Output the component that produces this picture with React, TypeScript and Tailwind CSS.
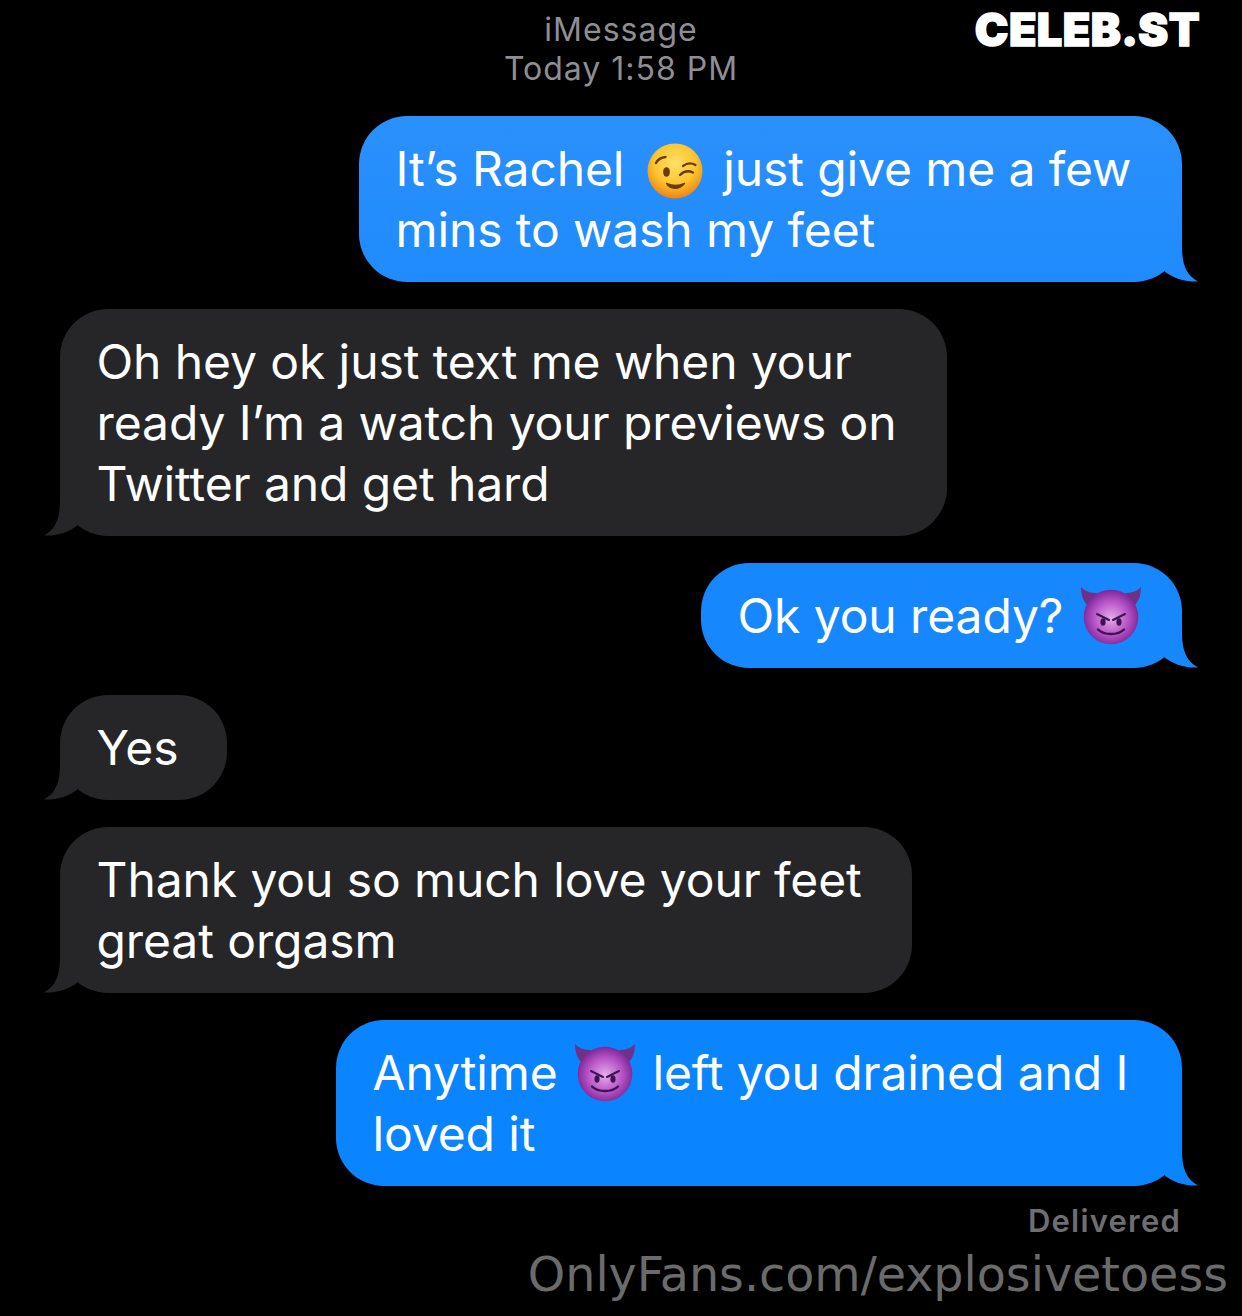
const textFont = { fontFamily: "Inter, 'Liberation Sans', sans-serif" };

function Wink({ size = 60 }: { size?: number }) {
  return (
    <svg width={size} height={size} viewBox="0 0 60 60" className="-my-[10px] ml-[7px] mr-[5px] inline-block align-[-4.5px]">
      <defs>
        <radialGradient id="winkFace" cx="50%" cy="36%" r="64%">
          <stop offset="0%" stopColor="#ffe066" />
          <stop offset="60%" stopColor="#fcc430" />
          <stop offset="100%" stopColor="#ee8412" />
        </radialGradient>
      </defs>
      <circle cx="30" cy="30" r="27.5" fill="url(#winkFace)" />
      <path d="M11 22 C13 18 16 16.5 20.5 16" stroke="#6b3c08" strokeWidth="2.4" fill="none" strokeLinecap="round" />
      <path d="M38 25 C42 22 47 22 50.5 24" stroke="#6b3c08" strokeWidth="2.2" fill="none" strokeLinecap="round" />
      <ellipse cx="21.5" cy="31" rx="3.4" ry="4.8" fill="#6b3c08" />
      <path d="M35 34 C39 30 44 29.5 48 31.5" stroke="#6b3c08" strokeWidth="2.4" fill="none" strokeLinecap="round" />
      <path d="M21.5 42.5 C25 48.5 34 49 39.5 42.5 C34 45 27 45 21.5 42.5Z" fill="#6b3c08" stroke="#6b3c08" strokeWidth="1.4" strokeLinejoin="round" />
    </svg>
  );
}

function Imp({ id, size = 62 }: { id: string; size?: number }) {
  return (
    <svg width={size} height={size} viewBox="0 0 62 62" className="-my-[10px] mx-[3px] inline-block align-[-3.5px]">
      <defs>
        <radialGradient id={id} cx="50%" cy="52%" r="52%">
          <stop offset="0%" stopColor="#e4ade9" />
          <stop offset="60%" stopColor="#b755c6" />
          <stop offset="100%" stopColor="#7d2598" />
        </radialGradient>
      </defs>
      <path d="M1 2 C1 10 3 15 7 20 L17 8 C10 8 5 6 1 2Z" fill="#6e3186" />
      <path d="M61 2 C61 10 59 15 55 20 L45 8 C52 8 57 6 61 2Z" fill="#6e3186" />
      <circle cx="31" cy="32" r="27.3" fill={`url(#${id})`} />
      <path d="M17 29 L29 35 M45 29 L33 35" stroke="#3f1353" strokeWidth="2" strokeLinecap="round" />
      <ellipse cx="23" cy="37" rx="2.6" ry="3.8" fill="#3f1353" />
      <ellipse cx="39" cy="37" rx="2.6" ry="3.8" fill="#3f1353" />
      <path d="M18 44.5 C24 50.5 38 50.5 44 44.5" stroke="#3f1353" strokeWidth="2.4" fill="none" strokeLinecap="round" />
    </svg>
  );
}

function Tail({ side, color }: { side: "left" | "right"; color: string }) {
  return (
    <svg
      width="50"
      height="50"
      viewBox="0 0 50 50"
      className={side === "right" ? "absolute bottom-0 right-[-16px]" : "absolute bottom-0 left-[-16px] -scale-x-100"}
    >
      <path d="M0 0 L34 0 L34 14 C34 32 38 43 50 49.5 C38 50 25 47 15 38 L0 20 Z" fill={color} />
    </svg>
  );
}

function Bubble({
  side,
  width,
  bg,
  tail,
  children,
}: {
  side: "left" | "right";
  width: string;
  bg: string;
  tail: string;
  children: React.ReactNode;
}) {
  return (
    <div className={`relative ${width} ${side === "right" ? "self-end" : "self-start"}`}>
      <Tail side={side} color={tail} />
      <div className={`relative rounded-[48px] py-[22px] pl-[36.5px] pr-[30px] ${bg}`}>
        <div className="relative whitespace-nowrap text-[48px] leading-[61px] tracking-[-0.1px] text-white">{children}</div>
      </div>
    </div>
  );
}

export default function App() {
  return (
    <div className="relative h-[1316px] w-[1242px] overflow-hidden bg-black" style={textFont}>
      <div className="pt-[10px] text-center text-[32px] leading-[39px] tracking-[1px] text-[#8e8e93]">
        <div>iMessage</div>
        <div>Today 1:58 PM</div>
      </div>
      <div className="absolute right-[42px] top-[4px] text-[45px] font-black leading-[52px] tracking-[0.4px] text-white [-webkit-text-stroke:1.5px_white]">
        CELEB.ST
      </div>

      <div className="mt-[28px] flex flex-col gap-[27px] pl-[60px] pr-[60px]">
        <Bubble side="right" width="w-[823px]" bg="bg-gradient-to-b from-[#2a90fb] to-[#1f8bfd]" tail="#1f8bfd">
          It’s Rachel <Wink /> just give me a few
          <br />
          mins to wash my feet
        </Bubble>
        <Bubble side="left" width="w-[887px]" bg="bg-[#262628]" tail="#262628">
          Oh hey ok just text me when your
          <br />
          ready I’m a watch your previews on
          <br />
          Twitter and get hard
        </Bubble>
        <Bubble side="right" width="w-[481px]" bg="bg-[#1787fe]" tail="#1787fe">
          Ok you ready? <Imp id="impA" />
        </Bubble>
        <Bubble side="left" width="w-[167px]" bg="bg-[#262628]" tail="#262628">
          Yes
        </Bubble>
        <Bubble side="left" width="w-[852px]" bg="bg-[#262628]" tail="#262628">
          Thank you so much love your feet
          <br />
          great orgasm
        </Bubble>
        <Bubble side="right" width="w-[846px]" bg="bg-[#0a84ff]" tail="#0a84ff">
          Anytime <Imp id="impB" /> left you drained and I
          <br />
          loved it
        </Bubble>
      </div>

      <div className="mt-[16px] pr-[61px] text-right text-[31px] font-semibold leading-[38px] tracking-[1.2px] text-[#6e6e73]">
        Delivered
      </div>
      <div
        className="absolute bottom-[11px] right-[14px] text-[47.6px] leading-[60px] text-[#6b6b6b]"
        style={{ fontFamily: "'DejaVu Sans', sans-serif" }}
      >
        OnlyFans.com/explosivetoess
      </div>
    </div>
  );
}
